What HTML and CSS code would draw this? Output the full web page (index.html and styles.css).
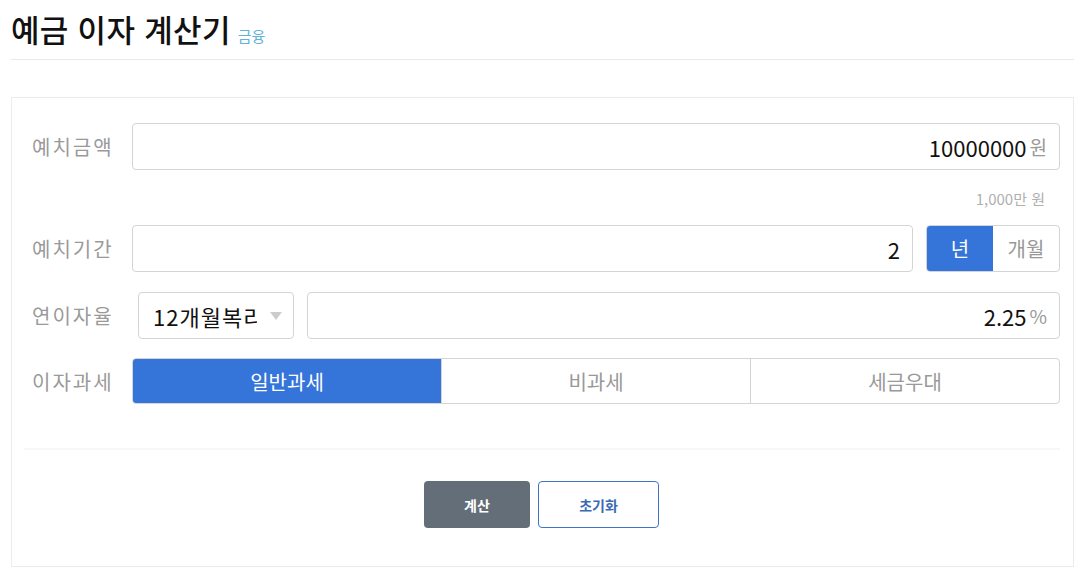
FILE: index.html
```html
<!DOCTYPE html>
<html lang="ko">
<head>
  <meta charset="UTF-8" />
  <title>예금 이자 계산기</title>
  <link rel="stylesheet" href="styles.css">
</head>
<body>
  <div class="page">
    <div class="header">
      <h1>예금 이자 계산기</h1>
      <span class="category">금융</span>
    </div>

    <div class="card">
      <div class="row">
        <label class="label">예치금액</label>
        <div class="field">
          <span class="value">10000000</span>
          <span class="unit">원</span>
        </div>
      </div>
      <div class="hint">1,000만 원</div>

      <div class="row wide">
        <label class="label">예치기간</label>
        <div class="field">
          <span class="value">2</span>
        </div>
        <div class="toggle">
          <span class="seg active">년</span>
          <span class="seg">개월</span>
        </div>
      </div>

      <div class="row">
        <label class="label narrow">연이자율</label>
        <div class="select">
          <span class="select-text">12개월복리</span>
          <span class="arrow"></span>
        </div>
        <div class="field">
          <span class="value">2.25</span>
          <span class="unit">%</span>
        </div>
      </div>

      <div class="row last">
        <label class="label">이자과세</label>
        <div class="tabs">
          <span class="tab active">일반과세</span>
          <span class="tab">비과세</span>
          <span class="tab">세금우대</span>
        </div>
      </div>

      <div class="divider"></div>

      <div class="actions">
        <button type="button" class="btn btn-calc">계산</button>
        <button type="button" class="btn btn-reset">초기화</button>
      </div>
    </div>
  </div>
</body>
</html>
```

FILE: styles.css
```css
body {
  margin: 0;
  font-family: "Noto Sans CJK KR", "Noto Sans", sans-serif;
  background: #fff;
  color: #222;
}
.page {
  padding: 0 11px;
}
.header {
  display: flex;
  align-items: baseline;
  gap: 7px;
  height: 60px;
  border-bottom: 1px solid #e9e9e9;
  box-sizing: border-box;
}
.header h1 {
  margin: 6px 0 0 0;
  font-size: 31px;
  font-weight: 500;
  color: #111;
  letter-spacing: 0.3px;
}
.category {
  font-size: 15px;
  color: #5fb3d9;
}
.card {
  margin-top: 37px;
  border: 1px solid #ececec;
  padding: 25px 13px 38px 20px;
}
.row {
  display: flex;
  align-items: center;
  gap: 13px;
  margin-bottom: 19px;
}
.row.wide {
  margin-bottom: 20px;
}
.row.last {
  margin-bottom: 0;
}
.label {
  width: 100px;
  flex: none;
  margin-right: -13px;
  font-size: 20px;
  letter-spacing: 2px;
  color: #9a9a9a;
}
.label.narrow {
  width: 106px;
}
.field {
  flex: 1;
  height: 47px;
  box-sizing: border-box;
  border: 1px solid #d4d4d4;
  border-radius: 4px;
  display: flex;
  align-items: center;
  justify-content: flex-end;
  padding: 0 12px;
  gap: 3px;
}
.value {
  font-size: 22px;
  color: #111;
}
.unit {
  font-size: 19px;
  color: #999;
}
.hint {
  text-align: right;
  font-size: 15px;
  color: #b0b0b0;
  padding-right: 15px;
  margin: -1px 0 16px 0;
}
.toggle {
  display: flex;
  width: 134px;
  height: 47px;
  box-sizing: border-box;
  border: 1px solid #d4d4d4;
  border-radius: 4px;
  overflow: hidden;
}
.seg, .tab {
  flex: 1;
  display: flex;
  align-items: center;
  justify-content: center;
  font-size: 20px;
  color: #999;
}
.seg.active, .tab.active {
  background: #3574d9;
  color: #fff;
}
.select {
  width: 156px;
  height: 47px;
  box-sizing: border-box;
  border: 1px solid #d4d4d4;
  border-radius: 4px;
  display: flex;
  align-items: center;
  padding-left: 14px;
  gap: 13px;
}
.select-text {
  width: 104px;
  overflow: hidden;
  white-space: nowrap;
  font-size: 22px;
  letter-spacing: 1px;
  color: #111;
}
.arrow {
  width: 0;
  height: 0;
  border-left: 6px solid transparent;
  border-right: 6px solid transparent;
  border-top: 8px solid #ccc;
}
.tabs {
  flex: 1;
  display: flex;
  height: 46px;
  box-sizing: border-box;
  border: 1px solid #d4d4d4;
  border-radius: 4px;
  overflow: hidden;
}
.tab + .tab {
  border-left: 1px solid #d4d4d4;
}
.divider {
  height: 2px;
  background: #f7f7f7;
  margin: 44px 0 31px -8px;
}
.actions {
  display: flex;
  justify-content: center;
  gap: 8px;
  padding-right: 9px;
}
.btn {
  height: 47px;
  border-radius: 4px;
  font-family: inherit;
  font-size: 14px;
  font-weight: bold;
  cursor: pointer;
}
.btn-calc {
  width: 106px;
  background: #636e78;
  border: none;
  color: #fff;
}
.btn-reset {
  width: 121px;
  background: #fff;
  border: 1px solid #3f74c2;
  color: #3a6ab3;
}
```
